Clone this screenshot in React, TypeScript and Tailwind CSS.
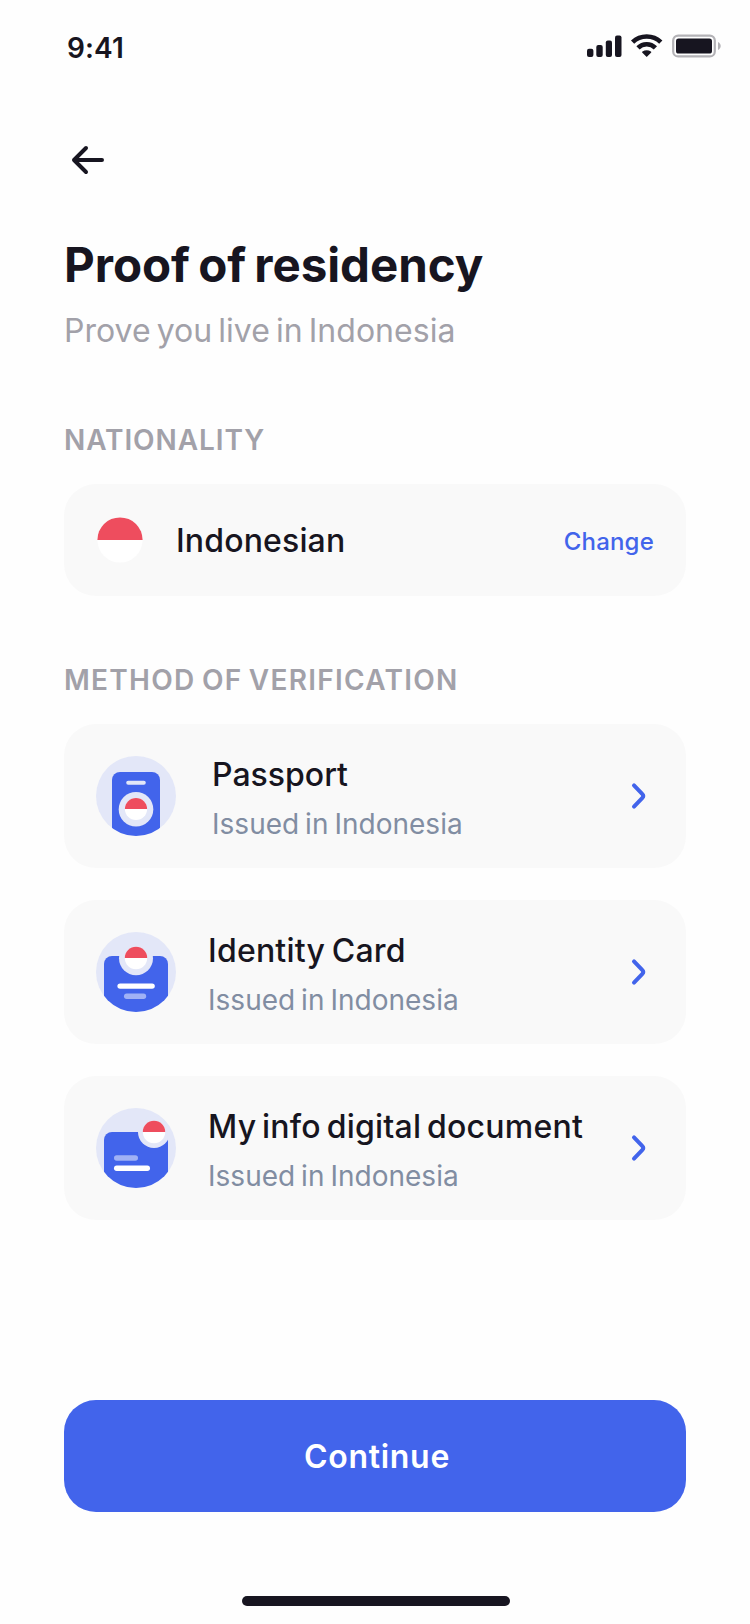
import type { ReactNode } from 'react';

const FLAG_RED = '#ee4d5e';
const BLUE = '#4264eb';
const TINT = '#e3e7f8';
const INK = '#171520';

function Flag({ cx, cy, r }: { cx: number; cy: number; r: number }) {
  return (
    <>
      <circle cx={cx} cy={cy} r={r} fill="#fff" />
      <path d={`M${cx - r} ${cy}a${r} ${r} 0 0 1 ${2 * r} 0z`} fill={FLAG_RED} />
    </>
  );
}

function IconDisc({ id, children }: { id: string; children: ReactNode }) {
  return (
    <svg className="size-20 shrink-0" viewBox="0 0 80 80" fill="none">
      <clipPath id={id}>
        <circle cx="40" cy="40" r="40" />
      </clipPath>
      <circle cx="40" cy="40" r="40" fill={TINT} />
      <g clipPath={`url(#${id})`}>{children}</g>
    </svg>
  );
}

function PassportIcon() {
  return (
    <IconDisc id="disc-passport">
      <rect x="16" y="16" width="48" height="80" rx="8" fill={BLUE} />
      <rect x="30.2" y="24.8" width="19.6" height="4" rx="2" fill={TINT} />
      <circle cx="40" cy="53.3" r="17.3" fill={TINT} />
      <Flag cx={40} cy={53} r={11.1} />
    </IconDisc>
  );
}

function IdentityIcon() {
  return (
    <IconDisc id="disc-identity">
      <rect x="8" y="24" width="64" height="80" rx="8" fill={BLUE} />
      <circle cx="40" cy="26.3" r="17" fill={TINT} />
      <Flag cx={40} cy={26} r={11.2} />
      <rect x="21.4" y="51.4" width="37.4" height="5.4" rx="2.7" fill="#fff" />
      <rect x="28" y="61.5" width="22.2" height="5.4" rx="2.7" fill="#a0b1f5" />
    </IconDisc>
  );
}

function DocumentIcon() {
  return (
    <IconDisc id="disc-document">
      <rect x="8" y="24" width="64" height="80" rx="8" fill={BLUE} />
      <circle cx="58" cy="24" r="16" fill={TINT} />
      <Flag cx={58} cy={24} r={11.2} />
      <rect x="18" y="47.3" width="24" height="5.4" rx="2.7" fill="#a0b1f5" />
      <rect x="18" y="57.6" width="36" height="5.4" rx="2.7" fill="#fff" />
    </IconDisc>
  );
}

function StatusIcons() {
  return (
    <svg className="h-8 w-[140px]" viewBox="0 0 140 32" fill="none">
      <g transform="translate(0 .4)">
        <g fill={INK}>
          <rect x="3" y="16.3" width="6.4" height="8.4" rx="2" />
          <rect x="12.3" y="12.5" width="6.4" height="12.2" rx="2" />
          <rect x="21.8" y="8" width="6.2" height="16.7" rx="2" />
          <rect x="31" y="3" width="6.5" height="21.7" rx="2" />
        </g>
        <g stroke={INK} strokeWidth="4.6">
          <path d="M48.6 9.8a20.2 20.2 0 0 1 28.2 0" />
          <path d="M54 15.4a12.4 12.4 0 0 1 17.4 0" />
        </g>
        <path
          d="M62.7 24.5l-4.3-4.1c-.4-.4-.4-.9.1-1.2 2.5-1.8 5.9-1.8 8.4 0 .5.3.5.8.1 1.2z"
          fill={INK}
        />
        <rect x="89.2" y="3.2" width="41.6" height="20.8" rx="5" stroke="#b3b2b6" strokeWidth="2.2" />
        <rect x="92" y="6.1" width="36" height="15" rx="2.6" fill={INK} />
        <path d="M134 9.6c3.6 1.6 3.6 6.4 0 8z" fill="#b3b2b6" />
      </g>
    </svg>
  );
}

function Method({
  icon,
  title,
  textClass,
  titleClass,
}: {
  icon: ReactNode;
  title: string;
  textClass: string;
  titleClass: string;
}) {
  return (
    <button className="flex h-36 w-full items-center rounded-[32px] bg-[#f9f9f9] px-8 text-left">
      {icon}
      <div className={`flex flex-1 flex-col gap-[9px] whitespace-nowrap pt-[7px] ${textClass}`}>
        <span className={`text-[32px] font-medium leading-10 ${titleClass}`}>{title}</span>
        <span className="text-[28px] leading-10 tracking-[0.02px] text-[#818da2] [word-spacing:-2px]">
          Issued in Indonesia
        </span>
      </div>
      <svg className="h-12 w-8 shrink-0" viewBox="0 0 32 48" fill="none">
        <path
          d="M12 13.4L20.4 22.2Q22.2 24 20.4 25.8L12 34.6"
          stroke={BLUE}
          strokeWidth="4"
          strokeLinecap="round"
          strokeLinejoin="round"
        />
      </svg>
    </button>
  );
}

export default function App() {
  return (
    <main className="flex h-[1624px] w-[750px] flex-col bg-[#fefefe] px-16 pt-8 font-['Inter',sans-serif] text-[#171520]">
      <header className="-mr-[38px] flex h-8 items-center justify-between pl-[3px]">
        <span className="text-[28px] font-semibold leading-8 tracking-[0.1px]">9:41</span>
        <StatusIcons />
      </header>

      <button className="mt-[72px] size-12" aria-label="Back">
        <svg className="size-12" viewBox="0 0 48 48" fill="none">
          <path
            d="M22 12L10 24L22 36M10 24H38"
            stroke={INK}
            strokeWidth="4"
            strokeLinecap="round"
            strokeLinejoin="round"
          />
        </svg>
      </button>

      <h1 className="mt-[49px] whitespace-nowrap text-[47.5px] font-bold leading-[64px] tracking-[-0.04px] [word-spacing:-3px]">
        Proof of residency
      </h1>
      <p className="mt-[14px] text-[32px] leading-10 tracking-[0.03px] text-[#a2a1a9] [word-spacing:-3px]">
        Prove you live in Indonesia
      </p>

      <h2 className="mt-[69px] text-[28px] font-semibold leading-10 tracking-[0.92px] text-[#a2a1a9]">
        NATIONALITY
      </h2>
      <section className="mt-6 flex h-28 items-center rounded-[32px] bg-[#f9f9f9] px-8">
        <svg className="size-12 shrink-0" viewBox="0 0 48 48">
          <Flag cx={24} cy={24} r={22.6} />
        </svg>
        <span className="ml-8 flex-1 pt-0.5 text-[32px] font-medium leading-10 tracking-[0.15px]">
          Indonesian
        </span>
        <button className="pt-1 text-[24px] font-medium leading-8 tracking-[0.2px] text-[#4264eb]">
          Change
        </button>
      </section>

      <h2 className="mt-16 whitespace-nowrap text-[28px] font-semibold leading-10 tracking-[1.28px] text-[#a2a1a9] [word-spacing:-2px]">
        METHOD OF VERIFICATION
      </h2>
      <section className="mt-6 flex flex-col gap-8">
        <Method
          icon={<PassportIcon />}
          title="Passport"
          textClass="pl-9"
          titleClass="tracking-normal"
        />
        <Method
          icon={<IdentityIcon />}
          title="Identity Card"
          textClass="pl-8"
          titleClass="tracking-[0.2px] [word-spacing:-2px]"
        />
        <Method
          icon={<DocumentIcon />}
          title="My info digital document"
          textClass="pl-8"
          titleClass="tracking-[0.23px] [word-spacing:-3px]"
        />
      </section>

      <button className="mt-[180px] flex h-28 shrink-0 items-center justify-center rounded-[32px] bg-[#4264eb] pl-1 pt-0.5 text-[32px] font-semibold leading-10 tracking-[0.72px] text-white">
        Continue
      </button>
      <div className="ml-[178px] mt-[84px] h-2.5 w-[268px] rounded-full bg-[#171520]" />
    </main>
  );
}
